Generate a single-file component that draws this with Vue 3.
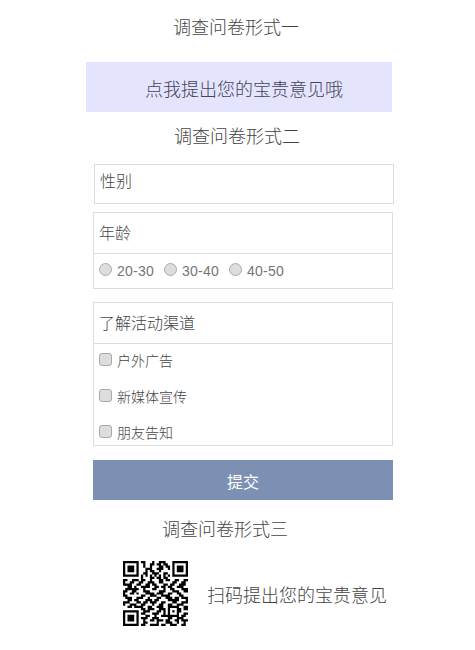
<script setup>
const ages = ['20-30', '30-40', '40-50']
const channels = ['户外广告', '新媒体宣传', '朋友告知']

const qr = [
  '11111110110001001110001111111',
  '10000010010011011011001000001',
  '10111010010010001101101011101',
  '10111010001110011100101011101',
  '10111010001011001000001011101',
  '10000010011001110011001000001',
  '11111110101010101010101111111',
  '00000000100011011011000000000',
  '11001110110010001101100110011',
  '10011001100111001100001100110',
  '11110011001101100011011001110',
  '00110100111100110110110011100',
  '01111110010001100010011000111',
  '11001100011100001110001110011',
  '10011010001111011100110011000',
  '11000000110011100111100001100',
  '01110011100100011001110110111',
  '00110110001110110000111110001',
  '11100011011011100110001100111',
  '10011100110001001100110011100',
  '00110111100110011100111110011',
  '00000000110111001110100011011',
  '11111110011100011010101011000',
  '10000010110001110010100010011',
  '10111010001100100111111110110',
  '10111010111001110000110011100',
  '10111010010011011101100110111',
  '10000010011000010001110010010',
  '11111110110011110110011100110'
]
const qrPath = qr
  .flatMap((row, y) => [...row].map((cell, x) => (cell === '1' ? `M${x} ${y}h1v1h-1z` : '')))
  .join('')
</script>

<template>
  <main class="page">
    <h2 class="title first">调查问卷形式一</h2>
    <a class="banner">点我提出您的宝贵意见哦</a>
    <h2 class="title second">调查问卷形式二</h2>

    <form class="survey" @submit.prevent>
      <div class="gender">性别</div>

      <section class="box ages">
        <div class="question">年龄</div>
        <div class="age-options">
          <label v-for="age in ages" :key="age" class="option age">
            <input type="radio" name="age" />
            <span>{{ age }}</span>
          </label>
        </div>
      </section>

      <section class="box channels">
        <div class="question">了解活动渠道</div>
        <label v-for="channel in channels" :key="channel" class="option channel">
          <input type="checkbox" />
          <span>{{ channel }}</span>
        </label>
      </section>

      <button class="submit" type="submit">提交</button>
    </form>

    <h2 class="title third">调查问卷形式三</h2>
    <div class="scan">
      <svg class="qr" viewBox="0 0 29 29" width="65" height="65">
        <path :d="qrPath" />
      </svg>
      <span>扫码提出您的宝贵意见</span>
    </div>
  </main>
</template>

<style>
body {
  background: #fff;
}
</style>

<style scoped>
.page {
  width: 475px;
  height: 650px;
  overflow: hidden;
  box-sizing: border-box;
  padding-top: 15px;
  color: #444;
  font-family: "Liberation Sans", "Noto Sans CJK SC", sans-serif;
  font-size: 18px;
}
.title {
  margin: 0;
  height: 26px;
  line-height: 26px;
  font-size: 18px;
  font-weight: 300;
}
.first {
  padding-left: 173px;
}
.second {
  margin-top: 12px;
  padding-left: 174px;
}
.third {
  margin-top: 17px;
  padding-left: 162px;
}
.banner {
  display: block;
  box-sizing: border-box;
  width: 306px;
  height: 50px;
  margin: 21px 0 0 86px;
  padding-left: 10px;
  background: #e4e4ff;
  color: #444458;
  font-weight: 300;
  line-height: 56px;
  text-align: center;
}
.survey {
  width: 301px;
  margin: 14px 0 0 93px;
  font-size: 16px;
  font-weight: 300;
}
.gender {
  box-sizing: border-box;
  width: 300px;
  height: 40px;
  margin-left: 1px;
  padding-left: 5px;
  border: 1px solid #ddd;
  line-height: 34px;
}
.box {
  box-sizing: border-box;
  width: 300px;
  border: 1px solid #ddd;
}
.ages {
  height: 77px;
  margin-top: 8px;
}
.question {
  box-sizing: border-box;
  height: 41px;
  padding-left: 5px;
  border-bottom: 1px solid #ddd;
  line-height: 42px;
}
.age-options {
  display: flex;
  gap: 10px;
  padding-left: 5px;
}
.option {
  display: flex;
  align-items: flex-start;
  gap: 5px;
  font-size: 14px;
  white-space: nowrap;
}
.option span {
  line-height: 34px;
}
.age {
  width: 55px;
  color: #757575;
  letter-spacing: 0.25px;
}
input {
  appearance: none;
  flex: none;
  box-sizing: border-box;
  width: 13px;
  height: 13px;
  margin: 9px 0 0;
  border: 1px solid #aaa;
  border-radius: 3px;
  background: #ddd;
}
input[type="radio"] {
  border-radius: 50%;
}
.channels {
  height: 144px;
  margin-top: 13px;
}
.channel {
  height: 36px;
  padding-left: 5px;
}
.submit {
  display: block;
  width: 300px;
  height: 40px;
  margin-top: 14px;
  padding: 2px 0 0;
  border: 0;
  background: #7b90b2;
  color: #fff;
  font: inherit;
  font-weight: 400;
}
.scan {
  display: flex;
  margin: 18px 0 0 123px;
  gap: 19px;
  font-weight: 300;
  line-height: 70px;
}
.qr {
  flex: none;
}
</style>
